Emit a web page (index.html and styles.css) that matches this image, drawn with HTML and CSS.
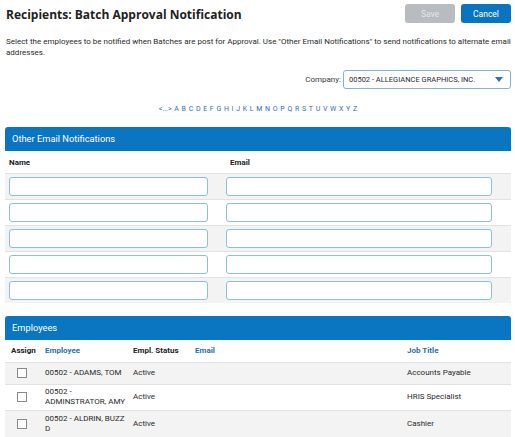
FILE: index.html
```html
<!DOCTYPE html>
<html>
<head>
<meta charset="utf-8">
<link rel="stylesheet" href="styles.css">
</head>
<body>
<div class="page">
  <div class="topbar">
    <h1 class="title">Recipients: Batch Approval Notification</h1>
    <div class="actions">
      <button class="btn btn-save">Save</button>
      <button class="btn btn-cancel">Cancel</button>
    </div>
  </div>
  <p class="desc">Select the employees to be notified when Batches are post for Approval. Use "Other Email Notifications" to send notifications to alternate email addresses.</p>
  <div class="company-row">
    <span class="company-label">Company:</span>
    <div class="select">
      <span>00502 - ALLEGIANCE GRAPHICS, INC.</span>
      <svg class="caret" width="8" height="5" viewBox="0 0 8 5"><path d="M0 0h8L4 5z" fill="#2d6fb0"/></svg>
    </div>
  </div>
  <div class="alpha">
    <a>&lt;...&gt;</a><a>A</a><a>B</a><a>C</a><a>D</a><a>E</a><a>F</a><a>G</a><a>H</a><a>I</a><a>J</a><a>K</a><a>L</a><a>M</a><a>N</a><a>O</a><a>P</a><a>Q</a><a>R</a><a>S</a><a>T</a><a>U</a><a>V</a><a>W</a><a>X</a><a>Y</a><a>Z</a>
  </div>

  <div class="panel">
    <div class="panel-head">Other Email Notifications</div>
    <div class="other-grid">
      <div class="ohead"><span class="c-name">Name</span><span class="c-email">Email</span></div>
      <div class="orow alt"><div class="c-name"><div class="inp name"></div></div><div class="c-email"><div class="inp email"></div></div></div>
      <div class="orow"><div class="c-name"><div class="inp name"></div></div><div class="c-email"><div class="inp email"></div></div></div>
      <div class="orow alt"><div class="c-name"><div class="inp name"></div></div><div class="c-email"><div class="inp email"></div></div></div>
      <div class="orow"><div class="c-name"><div class="inp name"></div></div><div class="c-email"><div class="inp email"></div></div></div>
      <div class="orow alt"><div class="c-name"><div class="inp name"></div></div><div class="c-email"><div class="inp email"></div></div></div>
    </div>
  </div>

  <div class="panel panel-emp">
    <div class="panel-head">Employees</div>
    <table class="emp">
      <thead>
        <tr>
          <th class="col-assign">Assign</th>
          <th class="col-emp link">Employee</th>
          <th class="col-status">Empl. Status</th>
          <th class="col-email link">Email</th>
          <th class="col-job link">Job Title</th>
        </tr>
      </thead>
      <tbody>
        <tr class="alt r1">
          <td class="col-assign"><span class="cb"></span></td>
          <td>00502 - ADAMS, TOM</td>
          <td>Active</td>
          <td></td>
          <td>Accounts Payable</td>
        </tr>
        <tr class="r2">
          <td class="col-assign"><span class="cb"></span></td>
          <td>00502 -<br>ADMINSTRATOR, AMY</td>
          <td>Active</td>
          <td></td>
          <td>HRIS Specialist</td>
        </tr>
        <tr class="alt r3">
          <td class="col-assign"><span class="cb"></span></td>
          <td>00502 - ALDRIN, BUZZ<br>D</td>
          <td>Active</td>
          <td></td>
          <td>Cashier</td>
        </tr>
      </tbody>
    </table>
  </div>
</div>
</body>
</html>
```
FILE: styles.css
```css
html, body {
  margin: 0;
  padding: 0;
  background: #fff;
}
body {
  font-family: Roboto, "Liberation Sans", sans-serif;
  font-size: 8px;
  color: #2a2a2a;
}
.page {
  padding: 4px 4px 0 5px;
}
.topbar {
  display: flex;
  justify-content: space-between;
  align-items: flex-start;
}
.title {
  font-family: "Open Sans", "Liberation Sans", sans-serif;
  font-weight: 700;
  font-size: 12px;
  color: #222;
  margin: 2px 0 0 1px;
  line-height: 18px;
}
.actions {
  display: flex;
  gap: 6px;
}
.btn {
  width: 50px;
  height: 19px;
  border: none;
  border-radius: 3px;
  font-family: Roboto, "Liberation Sans", sans-serif;
  font-size: 8.5px;
  padding: 0;
}
.btn-save {
  background: #b8bcc0;
  color: #e4e6e8;
}
.btn-cancel {
  background: #0a74c0;
  color: #fff;
}
.desc {
  margin: 12px 0 0 1px;
  line-height: 11px;
  font-size: 8px;
  color: #2a2a2a;
}
.company-row {
  display: flex;
  justify-content: flex-end;
  align-items: center;
  gap: 2px;
  margin-top: 12px;
}
.company-label {
  color: #3a3a3a;
}
.select {
  width: 154px;
  height: 17px;
  border: 1px solid #7fb3d8;
  border-radius: 3px;
  display: flex;
  align-items: center;
  justify-content: space-between;
  padding: 0 7px 0 5px;
  color: #2a2a2a;
  font-size: 7.5px;
}
.alpha {
  display: flex;
  justify-content: center;
  gap: 2.7px;
  margin-top: 15px;
  font-size: 7px;
  color: #2e6ead;
  line-height: 10px;
}
.alpha a {
  color: #2e6ead;
}
.panel {
  margin-top: 13px;
}
.panel-emp {
  margin-top: 13px;
}
.panel-head {
  background: #0a76c2;
  color: #fff;
  height: 24px;
  line-height: 24px;
  padding-left: 7px;
  font-size: 9.3px;
  border-radius: 3px 3px 0 0;
}
.other-grid .ohead,
.other-grid .orow {
  display: grid;
  grid-template-columns: 221px 1fr;
  align-items: center;
}
.ohead {
  height: 22px;
  font-weight: 700;
  color: #222;
}
.ohead span {
  padding-left: 4px;
}
.orow {
  height: 26px;
  border-top: 1px solid #e2e2e2;
  box-sizing: border-box;
}
.orow.alt {
  background: #f3f3f3;
}
.c-name {
  padding-left: 4px;
}
.inp {
  box-sizing: border-box;
  height: 19px;
  border: 1.5px solid #8cbfdf;
  border-radius: 3px;
  background: #fff;
}
.inp.name {
  width: 199px;
}
.inp.email {
  width: 266px;
}
.emp {
  width: 100%;
  border-collapse: collapse;
  table-layout: fixed;
}
.emp th,
.emp td {
  box-sizing: border-box;
}
.emp th {
  text-align: left;
  font-weight: 700;
  color: #222;
  height: 22px;
  padding: 0 2px 0 4px;
}
.emp th.link {
  color: #1f6fb5;
}
.emp td {
  padding: 0 2px 0 4px;
  border-top: 1px solid #e2e2e2;
  color: #2a2a2a;
  line-height: 10px;
}
.emp tr.r1 { height: 22px; }
.emp tr.r2 { height: 26px; }
.emp tr.r3 { height: 27px; }
.emp tr.alt td {
  background: #f3f3f3;
}
.col-assign {
  width: 36px;
}
.emp th.col-assign {
  padding-left: 6px;
}
.emp td.col-assign {
  padding-left: 12px;
}
.col-emp {
  width: 88px;
}
.col-status {
  width: 62px;
}
.col-email {
  width: 212px;
}
.cb {
  display: inline-block;
  width: 8px;
  height: 8px;
  border: 1px solid #8a8a8a;
  background: #fff;
  vertical-align: middle;
}
```
